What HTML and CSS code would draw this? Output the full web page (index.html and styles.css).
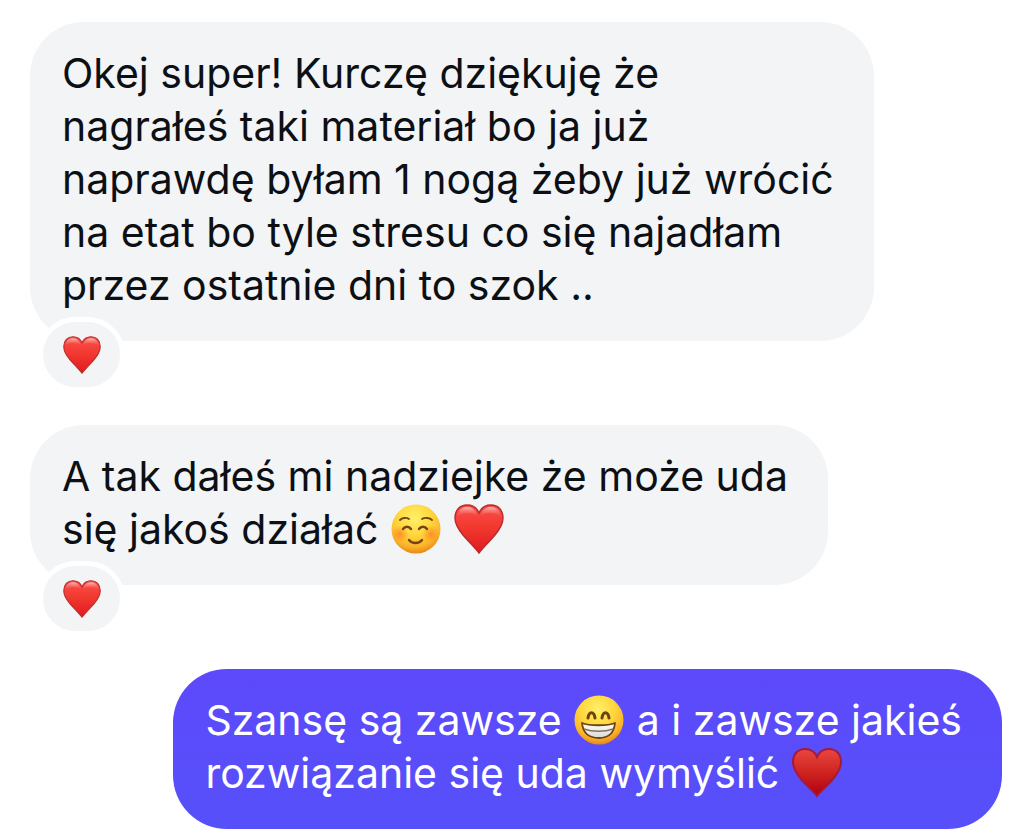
FILE: index.html
```html
<!DOCTYPE html>
<html lang="pl">
<head>
    <meta charset="UTF-8">
    <meta name="viewport" content="width=device-width, initial-scale=1">
    <title>Chat</title>
    <link rel="stylesheet" href="styles.css">
</head>
<body>
    <!-- Shared emoji shapes -->
    <svg class="sprite" aria-hidden="true">
        <defs>
            <linearGradient id="heartFill" x1="0" y1="0" x2="0" y2="1">
                <stop offset="0" stop-color="#f8504c"/>
                <stop offset="0.45" stop-color="#f2392f"/>
                <stop offset="1" stop-color="#dd1a20"/>
            </linearGradient>
            <linearGradient id="heartShine" x1="0" y1="0" x2="0" y2="1">
                <stop offset="0" stop-color="#ffd2cc" stop-opacity="0.8"/>
                <stop offset="1" stop-color="#ff6b60" stop-opacity="0"/>
            </linearGradient>
            <linearGradient id="suitFill" x1="0" y1="0" x2="0" y2="1">
                <stop offset="0" stop-color="#e9473f"/>
                <stop offset="0.5" stop-color="#cf2320"/>
                <stop offset="1" stop-color="#b00012"/>
            </linearGradient>
            <radialGradient id="faceFill" cx="0.47" cy="0.28" r="0.74">
                <stop offset="0" stop-color="#fff06a"/>
                <stop offset="0.45" stop-color="#ffd83f"/>
                <stop offset="0.78" stop-color="#fbb52a"/>
                <stop offset="1" stop-color="#e58215"/>
            </radialGradient>
            <radialGradient id="blush">
                <stop offset="0" stop-color="#ff6a1f" stop-opacity="0.6"/>
                <stop offset="1" stop-color="#ff7a1f" stop-opacity="0"/>
            </radialGradient>
            <linearGradient id="teeth" x1="0" y1="0" x2="0" y2="1">
                <stop offset="0" stop-color="#ffffff"/>
                <stop offset="1" stop-color="#d9dad6"/>
            </linearGradient>
        </defs>
        <symbol id="heart" viewBox="0 0 50 50">
            <path d="M25 49C22 45 15 38 9 31C4 25 1 20 1 14C1 6 6 1 13 1C19 1 23 4 25 9C27 4 31 1 37 1C44 1 49 6 49 14C49 20 46 25 41 31C35 38 28 45 25 49Z" fill="url(#heartFill)" stroke="#b92a2b" stroke-width="1.4"/>
            <path d="M3 13C4 6 8 3 13 3C19 3 22 7 24 12C18 8 8 8 3 13Z" fill="url(#heartShine)"/>
            <path d="M47 13C46 6 42 3 37 3C31 3 28 7 26 12C32 8 42 8 47 13Z" fill="url(#heartShine)"/>
        </symbol>
        <symbol id="suit" viewBox="0 0 50 50">
            <path d="M25 48C22 44 15 38 9 31C4 25 1 20 1 14C1 6 6 1 13 1C19 1 23 4 25 9C27 4 31 1 37 1C44 1 49 6 49 14C49 20 46 25 41 31C35 38 28 44 25 48Z" fill="url(#suitFill)" stroke="#a61a38" stroke-width="2"/>
        </symbol>
        <symbol id="smile" viewBox="0 0 50 50">
            <circle cx="25" cy="25" r="24.5" fill="url(#faceFill)"/>
            <circle cx="9" cy="30" r="9" fill="url(#blush)"/>
            <circle cx="40" cy="30" r="9" fill="url(#blush)"/>
            <g fill="none" stroke="#744510" stroke-linecap="round">
                <path d="M9 16C11 14 15 13 18 15" stroke-width="1.8"/>
                <path d="M31 15C34 13 39 14 41 16" stroke-width="1.8"/>
                <path d="M12 25C14 22 18 22 20 25" stroke-width="2.4"/>
                <path d="M28 25C30 22 34 22 36 25" stroke-width="2.4"/>
                <path d="M18 36C21 40 28 40 31 36" stroke-width="2.4"/>
            </g>
        </symbol>
        <symbol id="grin" viewBox="0 0 50 50">
            <circle cx="25" cy="25" r="24.5" fill="url(#faceFill)"/>
            <g fill="none" stroke="#704210" stroke-width="3" stroke-linecap="round">
                <path d="M14 23C15 16 20 16 21 23"/>
                <path d="M28 23C29 16 34 16 35 23"/>
            </g>
            <path d="M8 28C15 31 34 31 41 28C40 38 34 43 25 43C15 43 9 38 8 28Z" fill="url(#teeth)" stroke="#704210" stroke-width="1.8" stroke-linejoin="round"/>
            <path d="M10 34C18 37 31 37 39 34" fill="none" stroke="#85715c" stroke-width="1.4"/>
        </symbol>
    </svg>

    <main class="chat-messages">
        <div class="message received-message">
            Okej super! Kurczę dziękuję że<br>
            nagrałeś taki materiał bo ja już<br>
            naprawdę byłam 1 nogą żeby już wrócić<br>
            na etat bo tyle stresu co się najadłam<br>
            przez ostatnie dni to szok ..
            <span class="reaction">
                <svg role="img" aria-label="❤️"><use href="#heart"/></svg>
            </span>
        </div>
        <div class="message received-message">
            A tak dałeś mi nadziejke że może uda<br>
            się jakoś działać
            <svg class="emoji" role="img" aria-label="☺️"><use href="#smile"/></svg>
            <svg class="emoji" role="img" aria-label="❤️"><use href="#heart"/></svg>
            <span class="reaction">
                <svg role="img" aria-label="❤️"><use href="#heart"/></svg>
            </span>
        </div>
        <div class="message sent-message">
            Szansę są zawsze
            <svg class="emoji" role="img" aria-label="😁"><use href="#grin"/></svg>
            a i zawsze jakieś<br>
            rozwiązanie się uda wymyślić
            <svg class="emoji" role="img" aria-label="♥️"><use href="#suit"/></svg>
        </div>
    </main>
</body>
</html>
```
FILE: styles.css
```css
body {
    margin: 0;
    background: white;
    font-family: Inter, "Liberation Sans", sans-serif;
}

.sprite {
    position: absolute;
    width: 0;
    height: 0;
}

.chat-messages {
    display: flex;
    flex-direction: column;
    gap: 84px;
    padding: 22px 22px 8px 30px;
}

.message {
    position: relative;
    padding: 25px 40px 29px 32px;
    border-radius: 54px;
    font-size: 41px;
    line-height: 53px;
}

.received-message {
    align-self: flex-start;
    background-color: #f2f4f6;
    color: #0c1014;
}

.sent-message {
    align-self: flex-end;
    background: linear-gradient(#5d4afa, #5650fa);
    color: white;
}

.emoji {
    width: 50px;
    height: 50px;
    margin: -8px 1px;
    vertical-align: -2px;
}

/* Sits over the bottom edge of the bubble */
.reaction {
    position: absolute;
    top: calc(100% - 24px);
    left: 8px;
    display: flex;
    align-items: center;
    justify-content: center;
    width: 77px;
    height: 65px;
    border: 5px solid white;
    border-radius: 38px;
    background-color: #f2f4f6;
}

.reaction svg {
    width: 38px;
    height: 38px;
}
```
